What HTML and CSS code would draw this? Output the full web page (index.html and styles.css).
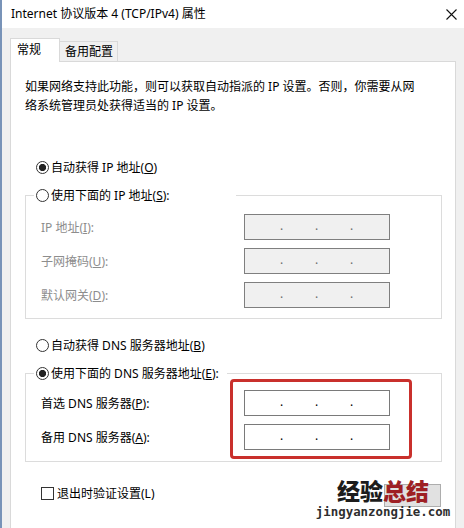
FILE: index.html
```html
<!DOCTYPE html>
<html lang="zh-CN">
<head>
<meta charset="utf-8">
<title>Internet 协议版本 4 (TCP/IPv4) 属性</title>
<link rel="stylesheet" href="styles.css">
</head>
<body>
<div class="window">
  <div class="titlebar">
    <span class="title">Internet 协议版本 4 (TCP/IPv4) 属性</span>
    <svg class="close" width="11" height="11" viewBox="0 0 11 11"><path d="M0.5 0.5L10.5 10.5M10.5 0.5L0.5 10.5" stroke="#111" stroke-width="1.1" fill="none"/></svg>
  </div>
  <div class="body">
    <div class="tabs">
      <div class="tab tab-active">常规</div>
      <div class="tab">备用配置</div>
    </div>
    <div class="panel">
      <p class="intro">如果网络支持此功能，则可以获取自动指派的 IP 设置。否则，你需要从网<br>络系统管理员处获得适当的 IP 设置。</p>

      <div class="opt opt-first"><span class="radio checked"></span><span>自动获得 IP 地址(<u>O</u>)</span></div>

      <fieldset class="group">
        <legend class="legend legend-ip"><span class="opt"><span class="radio"></span><span>使用下面的 IP 地址(<u>S</u>):</span></span></legend>
        <div class="rows">
          <div class="field disabled"><span class="label">IP 地址(<u>I</u>):</span><span class="ipbox"><i>.</i><i>.</i><i>.</i></span></div>
          <div class="field disabled"><span class="label">子网掩码(<u>U</u>):</span><span class="ipbox"><i>.</i><i>.</i><i>.</i></span></div>
          <div class="field disabled"><span class="label">默认网关(<u>D</u>):</span><span class="ipbox"><i>.</i><i>.</i><i>.</i></span></div>
        </div>
      </fieldset>

      <div class="opt opt-dns"><span class="radio"></span><span>自动获得 DNS 服务器地址(<u>B</u>)</span></div>

      <fieldset class="group group-dns">
        <legend class="legend legend-dns"><span class="opt"><span class="radio checked"></span><span>使用下面的 DNS 服务器地址(<u>E</u>):</span></span></legend>
        <div class="rows">
          <div class="field"><span class="label">首选 DNS 服务器(<u>P</u>):</span><span class="ipbox"><i>.</i><i>.</i><i>.</i></span></div>
          <div class="field"><span class="label">备用 DNS 服务器(<u>A</u>):</span><span class="ipbox"><i>.</i><i>.</i><i>.</i></span></div>
        </div>
      </fieldset>

      <div class="bottom">
        <div class="check-row"><span class="checkbox"></span><span>退出时验证设置(L)</span></div>
        <button class="btn" type="button" aria-label="高级"></button>
      </div>
    </div>
  </div>
  <div class="highlight"></div>
  <div class="watermark">
    <div class="wm-cn"><span class="wm-dark">经验</span><span class="wm-red">总结</span></div>
    <div class="wm-en">jingyanzongjie.com</div>
  </div>
</div>
</body>
</html>
```
FILE: styles.css
```css
* { box-sizing: border-box; }
html, body { margin: 0; padding: 0; background: #ffffff; }
body {
  font-family: "Noto Sans", "Noto Sans CJK SC", sans-serif;
  font-size: 12px;
  color: #000;
}
.window {
  position: relative;
  width: 464px;
  height: 528px;
  overflow: hidden;
  background: #f0f0f0;
  border-left: 2px solid #7893b8;
}
.titlebar {
  height: 28px;
  background: #ffffff;
  display: flex;
  align-items: center;
  padding-left: 9px;
}
.title { line-height: 16px; }
.close { margin-left: auto; margin-right: 7px; margin-top: 1px; }

.body { padding: 10px 8px 0 8px; }
.tabs {
  display: flex;
  align-items: flex-end;
  height: 24px;
  margin-bottom: -1px;
}
.tab {
  height: 21px;
  width: 58px;
  padding-left: 5px;
  line-height: 19px;
  background: #f0f0f0;
  border: 1px solid #d9d9d9;
  border-left: 0;
}
.tab-active {
  position: relative;
  z-index: 1;
  width: 50px;
  height: 24px;
  padding-left: 6px;
  line-height: 22px;
  background: #ffffff;
  border: 1px solid #d9d9d9;
  border-bottom: 0;
}
.panel {
  height: 500px;
  background: #ffffff;
  border: 1px solid #d9d9d9;
  padding: 15px 13px 0 14px;
}
.intro {
  margin: 0;
  line-height: 19px;
  white-space: nowrap;
}
.opt {
  display: flex;
  align-items: center;
  height: 20px;
  gap: 2px;
}
.opt-first { margin-top: 42px; padding-left: 11px; }
.opt-dns { margin-top: 16px; padding-left: 11px; }
.radio {
  width: 13px;
  height: 13px;
  border: 1px solid #333;
  border-radius: 50%;
  background: #fff;
  flex: none;
}
.radio.checked {
  background: radial-gradient(circle, #222 0 3.3px, #fff 3.9px);
}
.group {
  margin: 8px 0 0 0;
  padding: 9px 0 10px 0;
  border: 1px solid #dcdcdc;
  min-width: 0;
  width: 417px;
}
.group-dns { padding: 7px 0 11px 0; }
.legend {
  margin-left: 8px;
  padding: 0 0 0 2px;
  height: 20px;
  background: #fff;
}
.legend-ip { width: 202px; }
.legend-dns { width: 193px; }
.rows {
  display: flex;
  flex-direction: column;
  gap: 8px;
}
.field {
  display: flex;
  align-items: center;
  height: 26px;
  padding-left: 15px;
}
.label { flex: 0 0 203px; }
.ipbox {
  display: flex;
  width: 146px;
  height: 26px;
  border: 1px solid #7a7a7a;
  background: #fff;
  padding-left: 19px;
  align-items: center;
}
.ipbox i {
  font-style: normal;
  width: 35px;
  text-align: center;
  line-height: 12px;
  margin-top: -2px;
}
.field.disabled .label { color: #8d8d8d; }
.field.disabled .ipbox { background: #f0f0f0; border-color: #7f7f7f; }
.field.disabled .ipbox i { color: #6d6d6d; }

.bottom {
  display: flex;
  justify-content: space-between;
  align-items: flex-start;
  margin-top: 21px;
  width: 417px;
}
.check-row {
  display: flex;
  align-items: center;
  height: 20px;
  gap: 3px;
  padding-left: 16px;
}
.checkbox {
  width: 13px;
  height: 13px;
  border: 1px solid #333;
  background: #fff;
}
.btn {
  margin-top: 1px;
  margin-right: 1px;
  width: 57px;
  height: 23px;
  background: #e1e1e1;
  border: 1px solid #adadad;
  padding: 0;
}
.highlight {
  position: absolute;
  left: 228px;
  top: 379px;
  width: 182px;
  height: 80px;
  border: 3px solid #c9302c;
  border-radius: 4px;
}
.watermark {
  position: absolute;
  left: 313px;
  top: 479px;
  width: 136px;
  text-align: center;
}
.wm-cn {
  font-family: "Noto Sans CJK SC", sans-serif;
  font-weight: 900;
  font-size: 23px;
  line-height: 23px;
}
.wm-dark { color: #1c1c1c; }
.wm-red { color: #9e1f24; }
.wm-en {
  margin-top: 3px;
  font-family: "DejaVu Sans Mono", monospace;
  font-weight: bold;
  font-size: 12.4px;
  line-height: 13px;
  color: #2e2e2e;
}
```
